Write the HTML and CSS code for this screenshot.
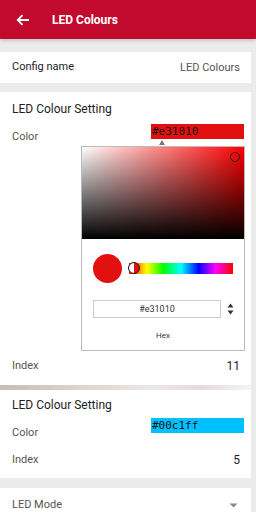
FILE: index.html
```html
<!DOCTYPE html>
<html lang="en">

<head>
    <meta charset="UTF-8">
    <meta name="viewport" content="width=device-width, initial-scale=1.0">
    <title>LED Colours</title>
    <link rel="stylesheet" href="styles.css">
</head>

<body>
    <header class="app-bar">
        <svg class="back" width="14" height="12" viewBox="0 0 14 12">
            <path d="M13 6H2M6.5 1.2L1.7 6l4.8 4.8" fill="none" stroke="#fff" stroke-width="1.8"/>
        </svg>
        <h1>LED Colours</h1>
    </header>

    <div class="card config">
        <span class="label-dark">Config name</span>
        <span class="value-light">LED Colours</span>
    </div>

    <div class="card setting">
        <h2>LED Colour Setting</h2>
        <div class="row color-row">
            <span class="label">Color</span>
            <div class="hex-wrap">
                <div class="hex red">#e31010</div>
                <div class="picker">
                    <div class="sv">
                        <div class="sv-white"></div>
                        <div class="sv-black"></div>
                        <div class="sv-handle"></div>
                    </div>
                    <div class="hue-row">
                        <div class="swatch"></div>
                        <div class="hue">
                            <div class="hue-handle"></div>
                        </div>
                    </div>
                    <div class="input-row">
                        <div class="hex-input">#e31010</div>
                        <svg class="spin" width="7" height="12" viewBox="0 0 7 12">
                            <path d="M3.5 0.5L6.5 4.5H0.5Z M3.5 11.5L6.5 7.5H0.5Z" fill="#333"/>
                        </svg>
                    </div>
                    <div class="hex-label">Hex</div>
                </div>
            </div>
        </div>
        <div class="row index-row">
            <span class="label">Index</span>
            <span class="num">11</span>
        </div>
    </div>

    <div class="divider"></div>

    <div class="card setting second">
        <h2>LED Colour Setting</h2>
        <div class="row color-row">
            <span class="label">Color</span>
            <div class="hex blue">#00c1ff</div>
        </div>
        <div class="row index-row">
            <span class="label">Index</span>
            <span class="num">5</span>
        </div>
    </div>

    <div class="card mode">
        <span class="label">LED Mode</span>
        <svg width="9" height="5" viewBox="0 0 9 5">
            <path d="M0.5 0.5H8.5L4.5 4.5Z" fill="#888"/>
        </svg>
    </div>
</body>

</html>
```

FILE: styles.css
```css
body {
    margin: 0;
    background-color: #ebebeb;
    font-family: Roboto, "Liberation Sans", sans-serif;
    width: 256px;
    height: 512px;
    overflow: hidden;
}

.app-bar {
    height: 39px;
    background-color: #c20a2e;
    display: flex;
    align-items: center;
    padding-left: 16px;
    box-shadow: 0 2px 3px rgba(0, 0, 0, 0.15);
}

.app-bar h1 {
    margin: 0 0 0 22px;
    color: #fff;
    font-size: 12px;
    font-weight: 700;
}

.back {
    margin-top: 1px;
}

.card {
    background-color: #fff;
    width: 251px;
}

.config {
    margin-top: 13px;
    height: 31px;
    display: flex;
    align-items: center;
    justify-content: space-between;
    padding: 0 11px 0 12px;
    box-sizing: border-box;
}

.label-dark {
    font-size: 11px;
    color: #222;
    margin-top: -2px;
}

.value-light {
    font-size: 11px;
    color: #555;
}

.setting {
    margin-top: 9px;
    padding: 10px 7px 0 12px;
    box-sizing: border-box;
    height: 293px;
}

.setting h2 {
    margin: 0;
    font-size: 12px;
    font-weight: 400;
    color: #222;
}

.row {
    display: flex;
    justify-content: space-between;
}

.label {
    font-size: 11px;
    color: #555;
}

.color-row {
    margin-top: 8px;
}

.color-row .label {
    margin-top: 6px;
}

.hex-wrap {
    display: flex;
    flex-direction: column;
    align-items: flex-end;
    position: relative;
}

.hex {
    width: 93px;
    height: 15px;
    box-sizing: border-box;
    padding-left: 1px;
    font-family: "DejaVu Sans Mono", monospace;
    font-size: 11px;
    line-height: 15px;
    color: #111;
}

.hex.red {
    background-color: #e31010;
    position: relative;
}

.hex.red::after {
    content: "";
    position: absolute;
    left: 8px;
    top: 16px;
    border-left: 3px solid transparent;
    border-right: 3px solid transparent;
    border-bottom: 5px solid #777;
}

.hex.blue {
    background-color: #00c1ff;
}

.picker {
    margin-top: 7px;
    width: 164px;
    height: 205px;
    box-sizing: border-box;
    border: 1px solid #bbb;
    background-color: #fff;
    margin-right: -1px;
}

.sv {
    position: relative;
    height: 92px;
    background-color: #ff0000;
}

.sv-white {
    position: absolute;
    inset: 0;
    background: linear-gradient(to right, #fff, rgba(255, 255, 255, 0));
}

.sv-black {
    position: absolute;
    inset: 0;
    background: linear-gradient(to bottom, rgba(0, 0, 0, 0), #000);
}

.sv-handle {
    position: absolute;
    right: 4px;
    top: 5px;
    width: 8px;
    height: 8px;
    border: 1.5px solid #222;
    border-radius: 50%;
}

.hue-row {
    display: flex;
    align-items: center;
    padding: 15px 0 0 11px;
}

.swatch {
    width: 29px;
    height: 29px;
    border-radius: 50%;
    background-color: #e31010;
}

.hue {
    position: relative;
    margin-left: 7px;
    width: 104px;
    height: 11px;
    background: linear-gradient(to right, #f00, #ff0 17%, #0f0 33%, #0ff 50%, #00f 67%, #f0f 83%, #f00);
}

.hue-handle {
    position: absolute;
    left: -1px;
    top: -1px;
    width: 10px;
    height: 10px;
    border: 1.5px solid #111;
    border-radius: 50%;
    background: linear-gradient(to right, #fff 50%, #e31010 50%);
}

.input-row {
    display: flex;
    align-items: center;
    padding: 17px 0 0 11px;
}

.hex-input {
    width: 128px;
    height: 18px;
    box-sizing: border-box;
    border: 1px solid #ccc;
    text-align: center;
    font-size: 9px;
    line-height: 16px;
    color: #333;
}

.spin {
    margin-left: 6px;
}

.hex-label {
    text-align: center;
    font-size: 8px;
    color: #333;
    margin-top: 13px;
}

.index-row {
    margin-top: 8px;
}

.num {
    font-size: 12px;
    color: #222;
    margin-right: 4px;
}

.divider {
    width: 251px;
    height: 5px;
    background: linear-gradient(to right, #c8bcb4, #ece8e6 60%, #e6dadd 80%, #f4f4f4);
}

.second {
    margin-top: 0;
    height: 88px;
    padding-top: 8px;
}

.second .color-row {
    margin-top: 6px;
}

.second .color-row .label {
    margin-top: 8px;
}

.second .index-row {
    margin-top: 14px;
}

.mode {
    margin-top: 10px;
    height: 40px;
    display: flex;
    justify-content: space-between;
    align-items: flex-start;
    padding: 10px 13px 0 12px;
    box-sizing: border-box;
}

.mode svg {
    margin-top: 5px;
}
```
